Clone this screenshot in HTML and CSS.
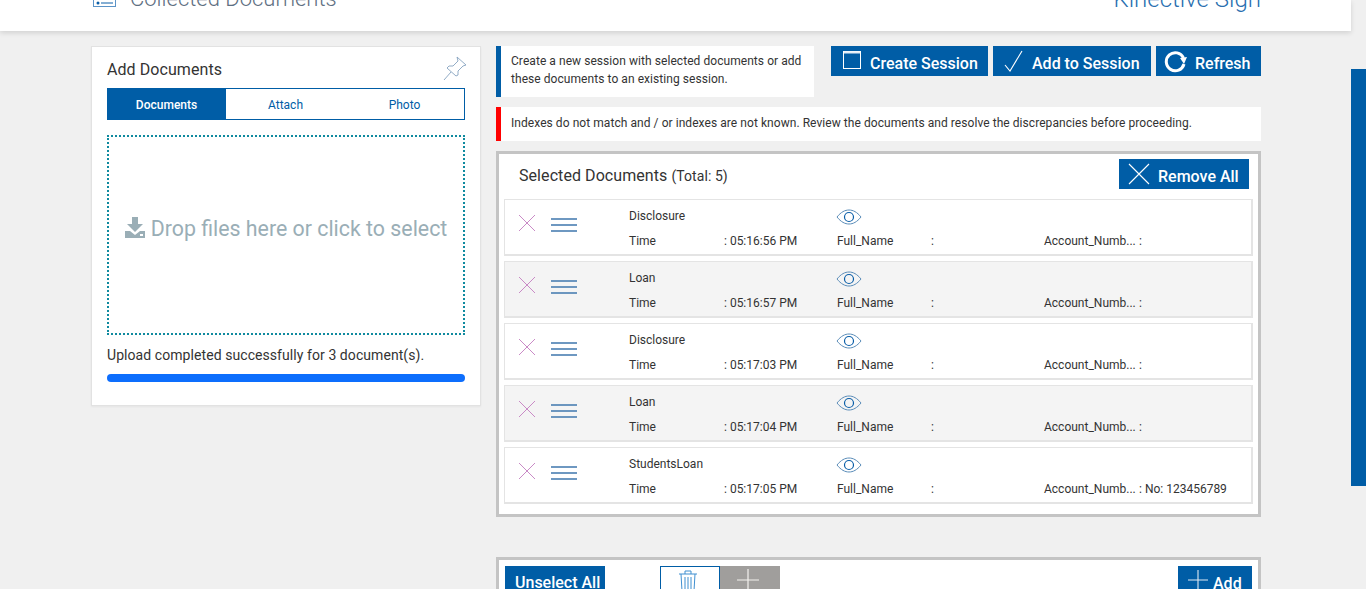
FILE: index.html
```html
<!DOCTYPE html>
<html lang="en">
<head>
<meta charset="utf-8">
<title>Collected Documents</title>
<link rel="stylesheet" href="styles.css">
</head>
<body>
<header class="topbar">
  <div class="topbar-title">
    <svg class="list-icon" width="25" height="20" viewBox="0 0 25 20"><rect x="1.5" y="0.5" width="22" height="15" fill="none" stroke="#5b93c7"/><circle cx="6" cy="5" r="1.5" fill="#0a5ea8"/><path d="M9 5h12" stroke="#0a5ea8"/><circle cx="6" cy="12" r="1.5" fill="#0a5ea8"/><path d="M9 12h12" stroke="#0a5ea8"/></svg>
    <span class="page-name">Collected Documents</span>
    <svg class="pin-mini" width="10" height="6" viewBox="0 0 10 6"><path d="M2 0v3M8 0v3M2 3h6" stroke="#8fb0cd" stroke-width="1.5" fill="none"/></svg>
  </div>
  <span class="brand">Kinective Sign</span>
</header>
<div class="scroll-thumb"></div>
<main class="layout">
  <section class="card">
    <div class="card-head">
      <h2>Add Documents</h2>
      <svg class="pin" width="24" height="25" viewBox="0 0 24 25"><path d="M1 24l7-8M14 1l9 8-3 1-5 5 0 4-2 1-9-8 2-2 4 0 5-5z" fill="none" stroke="#86a3bf" stroke-width="0.9"/></svg>
    </div>
    <div class="tabs">
      <span class="tab active">Documents</span>
      <span class="tab">Attach</span>
      <span class="tab">Photo</span>
    </div>
    <div class="dropzone">
      <svg width="20" height="22" viewBox="0 0 20 22"><path d="M7 0h6v7h5l-8 8-8-8h5z" fill="#9aaeb6"/><path d="M0 14h5l5 4 5-4h5v7H0z" fill="#9aaeb6"/><rect x="15" y="17" width="3" height="2" fill="#fff"/></svg>
      <span>Drop files here or click to select</span>
    </div>
    <p class="upload-msg">Upload completed successfully for 3 document(s).</p>
    <div class="progress"></div>
  </section>
  <div class="right">
    <div class="actions">
      <p class="note">Create a new session with selected documents or add these documents to an existing session.</p>
      <div class="btn-group">
        <button class="btn btn-create"><svg width="18" height="18" viewBox="0 0 18 18"><rect x="0.5" y="0.5" width="17" height="17" fill="none" stroke="#fff" stroke-width="1"/><path d="M1 1.5h16" stroke="#e3edf6" stroke-width="2"/></svg>Create Session</button>
        <button class="btn btn-add"><svg width="20" height="22" viewBox="0 0 20 22"><path d="M1 15l5 6L18 1" fill="none" stroke="#fff" stroke-width="1.1"/></svg>Add to Session</button>
        <button class="btn btn-refresh"><svg width="24" height="24" viewBox="0 0 24 24"><path d="M19.5 9A9 9 0 1 0 20 15" fill="none" stroke="#fff" stroke-width="3"/><path d="M23 8l-7 1 4 6z" fill="#fff"/></svg>Refresh</button>
      </div>
    </div>
    <p class="alert">Indexes do not match and / or indexes are not known. Review the documents and resolve the discrepancies before proceeding.</p>
    <section class="panel">
      <div class="panel-head">
        <h3>Selected Documents <small>(Total: 5)</small></h3>
        <button class="btn btn-remove"><svg width="22" height="22" viewBox="0 0 22 22"><path d="M1 1l20 20M21 1L1 21" stroke="#fff" stroke-width="1.1"/></svg>Remove All</button>
      </div>
      <div class="rows">
        <article class="row">
          <div class="row-icons">
            <svg class="x-icon" width="18" height="18" viewBox="0 0 18 18"><path d="M1 1l16 16M17 1L1 17" stroke="#c98ac6" stroke-width="1"/></svg>
            <svg class="menu-icon" width="26" height="14" viewBox="0 0 26 14"><path d="M0 1h26M0 7h26M0 13h26" stroke="#3f77ad" stroke-width="1.5"/></svg>
          </div>
          <span class="r1 c-title">Disclosure</span>
          <svg class="r1 c-eye" width="26" height="16" viewBox="0 0 26 16"><path d="M1 8C5 3 9 1 13 1s8 2 12 7c-4 5-8 7-12 7S5 13 1 8z" fill="none" stroke="#5b8db9"/><circle cx="13" cy="8" r="4.5" fill="none" stroke="#0a5ea8" stroke-width="1.2"/></svg>
          <span>Time</span><span>: 05:16:56 PM</span><span>Full_Name</span><span>:</span><span>Account_Numb...</span><span>:</span>
        </article>
        <article class="row alt">
          <div class="row-icons">
            <svg class="x-icon" width="18" height="18" viewBox="0 0 18 18"><path d="M1 1l16 16M17 1L1 17" stroke="#c98ac6" stroke-width="1"/></svg>
            <svg class="menu-icon" width="26" height="14" viewBox="0 0 26 14"><path d="M0 1h26M0 7h26M0 13h26" stroke="#3f77ad" stroke-width="1.5"/></svg>
          </div>
          <span class="r1 c-title">Loan</span>
          <svg class="r1 c-eye" width="26" height="16" viewBox="0 0 26 16"><path d="M1 8C5 3 9 1 13 1s8 2 12 7c-4 5-8 7-12 7S5 13 1 8z" fill="none" stroke="#5b8db9"/><circle cx="13" cy="8" r="4.5" fill="none" stroke="#0a5ea8" stroke-width="1.2"/></svg>
          <span>Time</span><span>: 05:16:57 PM</span><span>Full_Name</span><span>:</span><span>Account_Numb...</span><span>:</span>
        </article>
        <article class="row">
          <div class="row-icons">
            <svg class="x-icon" width="18" height="18" viewBox="0 0 18 18"><path d="M1 1l16 16M17 1L1 17" stroke="#c98ac6" stroke-width="1"/></svg>
            <svg class="menu-icon" width="26" height="14" viewBox="0 0 26 14"><path d="M0 1h26M0 7h26M0 13h26" stroke="#3f77ad" stroke-width="1.5"/></svg>
          </div>
          <span class="r1 c-title">Disclosure</span>
          <svg class="r1 c-eye" width="26" height="16" viewBox="0 0 26 16"><path d="M1 8C5 3 9 1 13 1s8 2 12 7c-4 5-8 7-12 7S5 13 1 8z" fill="none" stroke="#5b8db9"/><circle cx="13" cy="8" r="4.5" fill="none" stroke="#0a5ea8" stroke-width="1.2"/></svg>
          <span>Time</span><span>: 05:17:03 PM</span><span>Full_Name</span><span>:</span><span>Account_Numb...</span><span>:</span>
        </article>
        <article class="row alt">
          <div class="row-icons">
            <svg class="x-icon" width="18" height="18" viewBox="0 0 18 18"><path d="M1 1l16 16M17 1L1 17" stroke="#c98ac6" stroke-width="1"/></svg>
            <svg class="menu-icon" width="26" height="14" viewBox="0 0 26 14"><path d="M0 1h26M0 7h26M0 13h26" stroke="#3f77ad" stroke-width="1.5"/></svg>
          </div>
          <span class="r1 c-title">Loan</span>
          <svg class="r1 c-eye" width="26" height="16" viewBox="0 0 26 16"><path d="M1 8C5 3 9 1 13 1s8 2 12 7c-4 5-8 7-12 7S5 13 1 8z" fill="none" stroke="#5b8db9"/><circle cx="13" cy="8" r="4.5" fill="none" stroke="#0a5ea8" stroke-width="1.2"/></svg>
          <span>Time</span><span>: 05:17:04 PM</span><span>Full_Name</span><span>:</span><span>Account_Numb...</span><span>:</span>
        </article>
        <article class="row">
          <div class="row-icons">
            <svg class="x-icon" width="18" height="18" viewBox="0 0 18 18"><path d="M1 1l16 16M17 1L1 17" stroke="#c98ac6" stroke-width="1"/></svg>
            <svg class="menu-icon" width="26" height="14" viewBox="0 0 26 14"><path d="M0 1h26M0 7h26M0 13h26" stroke="#3f77ad" stroke-width="1.5"/></svg>
          </div>
          <span class="r1 c-title">StudentsLoan</span>
          <svg class="r1 c-eye" width="26" height="16" viewBox="0 0 26 16"><path d="M1 8C5 3 9 1 13 1s8 2 12 7c-4 5-8 7-12 7S5 13 1 8z" fill="none" stroke="#5b8db9"/><circle cx="13" cy="8" r="4.5" fill="none" stroke="#0a5ea8" stroke-width="1.2"/></svg>
          <span>Time</span><span>: 05:17:05 PM</span><span>Full_Name</span><span>:</span><span>Account_Numb...</span><span>: No: 123456789</span>
        </article>
      </div>
    </section>
    <section class="panel panel-bottom">
      <button class="btn btn-unselect">Unselect All</button>
      <div class="toggle">
        <span class="toggle-trash"><svg width="18" height="22" viewBox="0 0 18 22"><path d="M0 4h18M6 4V1h6v3M2 4l1 17h12l1-17M6 7v13M9 7v13M12 7v13" fill="none" stroke="#3f8fd0" stroke-width="1"/></svg></span>
        <span class="toggle-plus"><svg width="22" height="22" viewBox="0 0 22 22"><path d="M11 0v22M0 11h22" stroke="#f4f2ee" stroke-width="1.2"/></svg></span>
      </div>
      <button class="btn btn-plus"><svg width="20" height="20" viewBox="0 0 20 20"><path d="M10 0v20M0 10h20" stroke="#dfe9f3" stroke-width="1.1"/></svg>Add</button>
    </section>
  </div>
</main>
</body>
</html>
```
FILE: styles.css
```css
* { box-sizing: border-box; }
html, body { margin: 0; height: 589px; overflow: hidden; }
body { background: #f0f0f0; font-family: Roboto, "Liberation Sans", sans-serif; color: #333; position: relative; }

.topbar {
  width: 1351px; height: 31px; background: #fff;
  box-shadow: 0 2px 5px rgba(0,0,0,.13);
  display: flex; justify-content: space-between; align-items: flex-end;
  padding: 0 90px 20px 92px; overflow: hidden;
}
.topbar-title { display: flex; align-items: flex-end; }
.page-name { font-size: 22px; font-weight: 300; color: #5f7082; line-height: 28px; margin: 0 16px -2px 13px; }
.pin-mini { margin-bottom: 9px; }
.brand { font-size: 24px; font-weight: 300; color: #2a6fb0; line-height: 28px; margin-bottom: -2px; }

.scroll-thumb { position: absolute; left: 1351px; top: 69px; width: 15px; height: 417px; background: #005da6; }

.layout { display: flex; gap: 15px; padding: 15px 0 0 91px; align-items: flex-start; }

.card { width: 390px; height: 360px; background: #fff; border: 1px solid #e2e2e2; padding: 0 15px; box-shadow: 0 1px 2px rgba(0,0,0,.05); }
.card-head { height: 41px; display: flex; justify-content: space-between; padding-top: 12px; }
.card-head h2 { margin: 0; font-size: 16px; font-weight: 400; line-height: 22px; color: #333; letter-spacing: .07px; }
.pin { margin: -3px -2px 0 0; }
.tabs { display: grid; grid-template-columns: 118px 1fr 1fr; height: 32px; border: 1px solid #005da6; }
.tab { display: flex; align-items: center; justify-content: center; font-size: 12px; color: #005da6; padding-top: 1px; }
.tab.active { background: #005da6; color: #fff; font-weight: 500; margin: -1px 0 -1px -1px; }
.dropzone {
  margin-top: 15px; height: 200px; border: 2px dotted #0f8a9f; padding-bottom: 14px;
  display: flex; align-items: center; justify-content: center; gap: 6px;
  font-size: 21.35px; color: #9aaeb6;
}
.upload-msg { margin: 12px 0 0; font-size: 14px; line-height: 17px; color: #333; letter-spacing: .07px; }
.progress { margin-top: 10px; height: 8px; border-radius: 4px; background: #0d6efd; }

.right { width: 765px; }
.actions { display: flex; justify-content: space-between; align-items: flex-start; }
.note { margin: 0; width: 318px; height: 51px; background: #fff; border-left: 5px solid #005da6; padding: 6px 5px 0 10px; font-size: 12px; line-height: 18px; color: #333; letter-spacing: .06px; }
.btn-group { display: flex; gap: 5px; }
.btn {
  height: 30px; background: #005da6; color: #fff; border: 0; padding: 4px 0 0;
  font-family: inherit; font-size: 16px; font-weight: 500;
  display: flex; align-items: center; white-space: nowrap;
}
.btn svg { margin-bottom: 5px; }
.btn-create svg { margin-bottom: 7px; }
.btn-create { width: 157px; padding-left: 12px; gap: 9px; }
.btn-add { width: 158px; padding-left: 11px; gap: 8px; }
.btn-refresh { width: 105px; padding-left: 8px; gap: 7px; }

.alert { margin: 10px 0 0; height: 34px; background: #fff; border-left: 5px solid #f00; padding: 0 10px; font-size: 12px; line-height: 33px; color: #333; letter-spacing: .06px; }

.panel { margin-top: 10px; height: 366px; background: #fff; border: 3px solid #c4c4c4; padding: 0 5px; }
.panel-head { height: 45px; display: flex; justify-content: space-between; align-items: flex-start; padding: 5px 0 0 15px; }
.panel-head h3 { margin: 7px 0 0; font-size: 16px; font-weight: 400; line-height: 20px; color: #333; letter-spacing: .07px; }
.panel-head small { font-size: 14px; }
.btn-remove { width: 130px; padding-left: 9px; gap: 8px; margin-right: 4px; }

.rows { display: flex; flex-direction: column; gap: 5px; }
.row {
  height: 57px; border: 2px solid #e4e4e4; border-width: 1px 2px 2px 1px; background: #fff;
  display: grid; grid-template-columns: 124px 95px 113px 94px 113px 95px 1fr; grid-template-rows: 32px 1fr;
  font-size: 12px; color: #333; align-items: center;
}
.row.alt { background: #f4f4f4; }
.row-icons { grid-column: 1; grid-row: 1 / 3; align-self: start; display: flex; align-items: flex-start; gap: 15px; padding: 14px 0 0 13px; }
.menu-icon { margin-top: 4px; }
.r1.c-title { grid-column: 2; grid-row: 1; }
.r1.c-eye { grid-column: 4; grid-row: 1; margin: 2px 0 0 -1px; }
.row > span:not(.r1) { grid-row: 2; white-space: nowrap; padding-bottom: 4px; }

.panel-bottom { margin-top: 40px; height: 80px; display: flex; align-items: flex-start; padding: 6px 6px 0; }
.btn-unselect { width: 100px; height: 32px; padding-left: 10px; padding-top: 0; }
.toggle { display: flex; margin-left: 55px; }
.toggle-trash, .toggle-plus { width: 60px; height: 32px; display: flex; justify-content: center; padding: 3px 4px 0 0; }
.toggle-trash { background: #fff; border: 1px solid #005da6; }
.toggle-plus { background: #a09e9c; }
.btn-plus { margin-left: auto; width: 74px; height: 32px; padding-left: 10px; gap: 5px; align-items: flex-start; padding-top: 8px; }
.btn-plus svg { margin: -4px 0 0; }
```
